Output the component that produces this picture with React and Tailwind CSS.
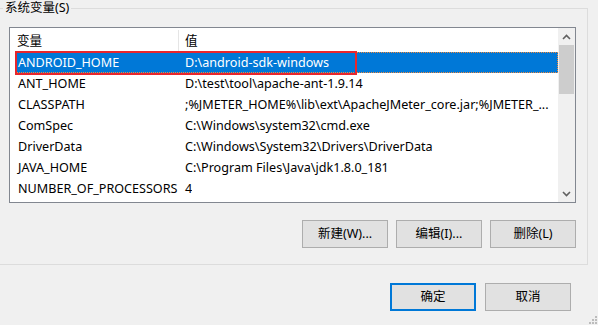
const rows = [
  { name: "ANDROID_HOME", value: "D:\\android-sdk-windows", selected: true },
  { name: "ANT_HOME", value: "D:\\test\\tool\\apache-ant-1.9.14" },
  { name: "CLASSPATH", value: ";%JMETER_HOME%\\lib\\ext\\ApacheJMeter_core.jar;%JMETER_..." },
  { name: "ComSpec", value: "C:\\Windows\\system32\\cmd.exe" },
  { name: "DriverData", value: "C:\\Windows\\System32\\Drivers\\DriverData" },
  { name: "JAVA_HOME", value: "C:\\Program Files\\Java\\jdk1.8.0_181" },
  { name: "NUMBER_OF_PROCESSORS", value: "4" },
];

function Chevron({ up }) {
  return (
    <svg width="9" height="6" viewBox="0 0 9 6">
      <path
        d={up ? "M1 5 L4.5 1.5 L8 5" : "M1 1 L4.5 4.5 L8 1"}
        fill="none"
        stroke="#606060"
        strokeWidth="1.6"
      />
    </svg>
  );
}

function Button({ children, primary }) {
  return (
    <button
      className={
        primary
          ? "w-[86px] h-[28px] bg-[#e1e1e1] border-2 border-[#0078d7] text-[12.5px] text-black flex items-center justify-center"
          : "w-[86px] h-[28px] bg-[#e1e1e1] border border-[#adadad] text-[12.5px] text-black flex items-center justify-center"
      }
    >
      {children}
    </button>
  );
}

export default function App() {
  return (
    <div
      className="w-[598px] h-[325px] bg-[#f0f0f0] overflow-hidden relative text-black"
      style={{ fontFamily: '"Noto Sans", "Noto Sans CJK SC", sans-serif' }}
    >
      {/* 系统变量 group box */}
      <div className="relative ml-[-10px] mt-[8px] w-[598px] h-[257px] border border-[#dcdcdc] pt-[18px] pl-[18px]">
        <div className="absolute left-[12px] top-[-9px] px-[2px] bg-[#f0f0f0] text-[12.5px] leading-[16px]">
          系统变量(S)
        </div>

        {/* list view */}
        <div className="relative w-[567px] h-[176px] border border-[#828790] bg-white flex">
          <div className="flex-1 flex flex-col text-[12.6px]">
            <div className="h-[24px] pt-[2px] flex items-center">
              <div className="w-[168px] pl-[7px]">变量</div>
              <div className="w-px h-[22px] bg-[#e5e5e5]" />
              <div className="pl-[6px]">值</div>
            </div>
            {rows.map((r) => (
              <div
                key={r.name}
                className={
                  r.selected
                    ? "ml-[6px] h-[21px] pt-[2px] flex items-center bg-[#0078d7] text-white border border-dotted border-[#f08a3c]"
                    : "ml-[6px] h-[21px] pt-[2px] flex items-center border border-transparent"
                }
              >
                <div className="w-[163px] pl-[1px] whitespace-nowrap">{r.name}</div>
                <div className="pl-[5px] whitespace-nowrap overflow-hidden">{r.value}</div>
              </div>
            ))}
          </div>

          {/* scrollbar */}
          <div className="w-[17px] bg-[#f0f0f0] flex flex-col items-stretch">
            <div className="h-[17px] flex items-center justify-center">
              <Chevron up />
            </div>
            <div className="h-[49px] mx-px bg-[#cdcdcd]" />
            <div className="flex-1" />
            <div className="h-[17px] flex items-center justify-center">
              <Chevron />
            </div>
          </div>

          {/* red annotation box */}
          <div className="absolute left-[5px] top-[23px] w-[342px] h-[24px] border-2 border-[#e8262c]" />
        </div>

        <div className="w-[567px] mt-[17px] flex justify-end gap-[8px]">
          <Button>新建(W)...</Button>
          <Button>编辑(I)...</Button>
          <Button>删除(L)</Button>
        </div>
      </div>

      <div className="mt-[18px] pr-[27px] flex justify-end gap-[9px]">
        <Button primary>确定</Button>
        <Button>取消</Button>
      </div>

      {/* size grip */}
      <svg className="absolute right-[1px] bottom-[1px]" width="9" height="9" viewBox="0 0 9 9">
        {[
          [7, 1],
          [4, 4],
          [7, 4],
          [1, 7],
          [4, 7],
          [7, 7],
        ].map(([x, y]) => (
          <rect key={`${x}-${y}`} x={x} y={y} width="2" height="2" fill="#bcbcbc" />
        ))}
      </svg>
    </div>
  );
}
